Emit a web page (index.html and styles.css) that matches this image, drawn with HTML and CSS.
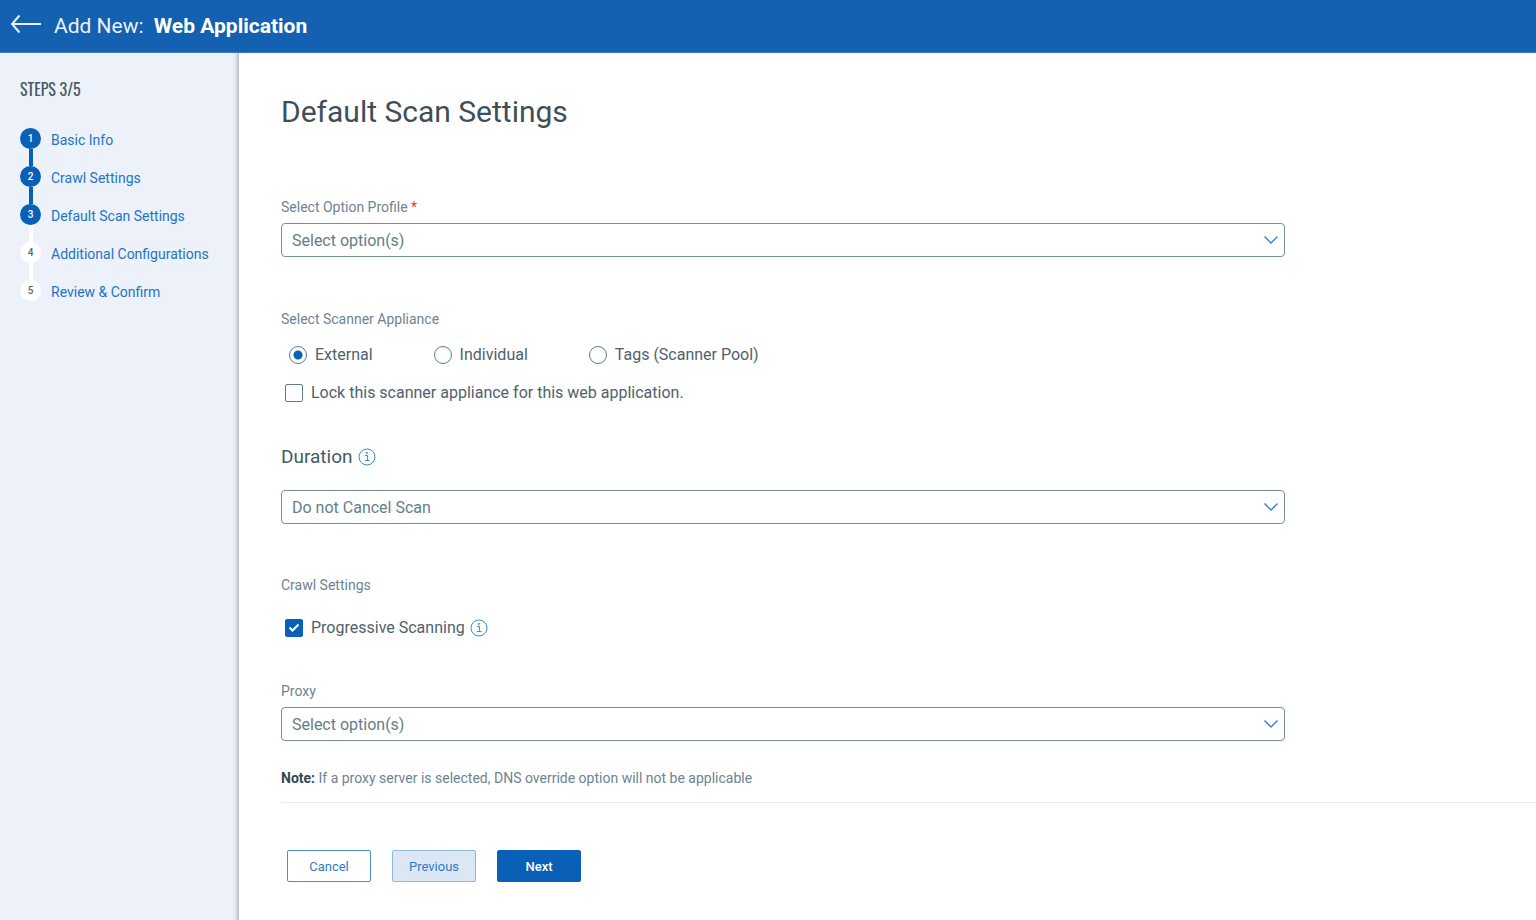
FILE: index.html
```html
<!DOCTYPE html>
<html lang="en">
<head>
<meta charset="utf-8">
<meta name="viewport" content="width=device-width, initial-scale=1">
<title>Add New: Web Application</title>
<link rel="stylesheet" href="styles.css">
</head>
<body>
<header class="topbar">
  <button class="back" type="button" aria-label="Back">
    <svg width="32" height="20" viewBox="0 0 32 20" fill="none" stroke="currentColor" stroke-width="2"><path d="M31 10H2M9.500 1.500L2 10L9.500 18.500"/></svg>
  </button>
  <h1 class="topbar-title">Add New: <strong>Web Application</strong></h1>
</header>
<div class="layout">
  <nav class="sidebar" aria-label="Steps">
    <h2 class="steps-title">STEPS 3/5</h2>
    <ol class="steps">
      <li class="step done"><span class="num">1</span><a href="#basic">Basic Info</a></li>
      <li class="step done"><span class="num">2</span><a href="#crawl">Crawl Settings</a></li>
      <li class="step current"><span class="num">3</span><a href="#scan">Default Scan Settings</a></li>
      <li class="step"><span class="num">4</span><a href="#additional">Additional Configurations</a></li>
      <li class="step"><span class="num">5</span><a href="#review">Review &amp; Confirm</a></li>
    </ol>
  </nav>
  <main class="content">
    <form class="form">
      <h2 class="page-title">Default Scan Settings</h2>

      <section class="group group-profile">
        <label class="label" for="profile">Select Option Profile <span class="required">*</span></label>
        <div class="select-box">
          <select id="profile"><option>Select option(s)</option></select>
          <svg class="chevron" width="16" height="10" viewBox="0 0 16 10"><path d="M1.500 1.500L8 8L14.500 1.500"/></svg>
        </div>
      </section>

      <fieldset class="group">
        <legend class="label">Select Scanner Appliance</legend>
        <div class="radios">
          <label class="choice"><input type="radio" name="scanner" checked>External</label>
          <label class="choice"><input type="radio" name="scanner">Individual</label>
          <label class="choice"><input type="radio" name="scanner">Tags (Scanner Pool)</label>
        </div>
        <label class="choice check"><input type="checkbox">Lock this scanner appliance for this web application.</label>
      </fieldset>

      <section class="group group-duration">
        <div class="heading">
          <label class="heading-label" for="duration">Duration</label>
          <svg class="info" width="18" height="18" viewBox="0 0 18 18"><circle cx="9" cy="9" r="8"/><path d="M7 7.500H9.500V12.500M7 12.500H11.500"/><path class="info-dot" d="M8 4h1.700v1.700H8z"/></svg>
        </div>
        <div class="select-box">
          <select id="duration"><option>Do not Cancel Scan</option></select>
          <svg class="chevron" width="16" height="10" viewBox="0 0 16 10"><path d="M1.500 1.500L8 8L14.500 1.500"/></svg>
        </div>
      </section>

      <fieldset class="group group-crawl">
        <legend class="label">Crawl Settings</legend>
        <div class="check-row">
          <label class="choice check"><input type="checkbox" checked>Progressive Scanning</label>
          <svg class="info" width="18" height="18" viewBox="0 0 18 18"><circle cx="9" cy="9" r="8"/><path d="M7 7.500H9.500V12.500M7 12.500H11.500"/><path class="info-dot" d="M8 4h1.700v1.700H8z"/></svg>
        </div>
      </fieldset>

      <section class="group group-proxy">
        <label class="label" for="proxy">Proxy</label>
        <div class="select-box">
          <select id="proxy"><option>Select option(s)</option></select>
          <svg class="chevron" width="16" height="10" viewBox="0 0 16 10"><path d="M1.500 1.500L8 8L14.500 1.500"/></svg>
        </div>
        <p class="note"><strong>Note:</strong> If a proxy server is selected, DNS override option will not be applicable</p>
      </section>

      <div class="actions">
        <button class="btn" type="button">Cancel</button>
        <button class="btn btn-soft" type="button">Previous</button>
        <button class="btn btn-primary" type="submit">Next</button>
      </div>
    </form>
  </main>
</div>
</body>
</html>
```
FILE: styles.css
```css
* { box-sizing: border-box; }

body {
  margin: 0;
  min-height: 100vh;
  display: flex;
  flex-direction: column;
  font-family: Roboto, "Liberation Sans", sans-serif;
  color: #455a64;
  background: #fff;
}

h1, h2, p, ol, fieldset, legend { margin: 0; padding: 0; }
fieldset { border: 0; min-width: 0; }
button, select, input { font-family: inherit; margin: 0; }

.topbar {
  display: flex;
  align-items: center;
  gap: 12px;
  height: 53px;
  padding: 0 10px;
  background: #1461b1;
  border-bottom: 1px solid #3a7cc0;
  color: #e9f2fb;
}
.back {
  display: flex;
  padding: 0 0 4px;
  border: 0;
  background: none;
  color: inherit;
}
.topbar-title { font-size: 21px; line-height: 28px; font-weight: 400; }
.topbar-title strong { margin-left: 5px; font-weight: 700; color: #fff; }

.layout { display: flex; flex: 1; }

.sidebar {
  flex: 0 0 239px;
  padding: 24px 20px;
  background: linear-gradient(to left, #b4bac2, #dde2ea 3px, #ecf1fa 6px);
}
.steps-title {
  font-family: Oswald, "Roboto Condensed", "Liberation Sans Narrow", sans-serif;
  font-size: 16px;
  line-height: 24px;
  font-weight: 400;
}
.steps { margin-top: 27px; list-style: none; }
.step {
  display: grid;
  grid-template-columns: 21px 1fr;
  grid-template-rows: 21px 17px;
  column-gap: 10px;
  font-size: 14px;
  line-height: 24px;
}
.step a { color: #2474c6; text-decoration: none; white-space: nowrap; }
.num {
  border-radius: 50%;
  background: #fff;
  color: #5a666d;
  font-size: 10px;
  font-weight: 500;
  line-height: 21px;
  text-align: center;
}
.done .num, .current .num { background: #0a5fb7; color: #fff; }
.step:not(:last-child)::after {
  content: "";
  grid-row: 2;
  width: 4px;
  justify-self: center;
  background: #fff;
}
.step.done::after { background: #0a5fb7; }

.content { flex: 1; min-width: 0; padding: 39px 0 37px 42px; }
.page-title { font-size: 30px; line-height: 40px; font-weight: 400; color: #3f4f58; }

.group { margin-top: 41px; }
.group-profile { margin: 65px 0 52px; }
.group-duration { margin-top: 38px; }
.group-crawl { margin-top: 51px; }

.label {
  display: block;
  font-size: 14px;
  line-height: 20px;
  color: #6d8492;
}
.required { color: #e53935; }

.select-box {
  position: relative;
  width: 80%;
  margin-top: 6px;
}
.select-box select {
  display: block;
  width: 100%;
  height: 34px;
  padding: 0 40px 0 10px;
  border: 1px solid #78909c;
  border-radius: 4px;
  appearance: none;
  background: #fff;
  color: #647d8a;
  font-size: 16px;
}
.chevron {
  position: absolute;
  right: 6px;
  top: 12px;
  fill: none;
  stroke: #2f7fd0;
  stroke-width: 1.4;
  pointer-events: none;
}

.radios {
  display: flex;
  gap: 61px;
  margin: 14px 0;
  padding-left: 8px;
}
.choice {
  display: flex;
  align-items: center;
  gap: 8px;
  font-size: 16px;
  line-height: 24px;
  color: #4f626c;
}
.check { padding-left: 4px; }
.choice input {
  appearance: none;
  flex: none;
  width: 18px;
  height: 18px;
  border: 1px solid #607d8b;
  background: #fff;
}
.choice input[type="radio"] { border-radius: 50%; }
.choice input[type="radio"]:checked {
  background: radial-gradient(circle, #0a5fb7 4px, #fff 5px);
}
.choice input[type="checkbox"] { border-radius: 2px; }
.choice input[type="checkbox"]:checked {
  border-color: #0a5fb7;
  background: #0a5fb7 url("data:image/svg+xml,%3Csvg xmlns='http://www.w3.org/2000/svg' viewBox='0 0 16 16'%3E%3Cpath d='M3.500 7.500L6.500 10.500L12.500 4.500' fill='none' stroke='white' stroke-width='2'/%3E%3C/svg%3E") center / 16px 16px no-repeat;
}

.heading { display: flex; align-items: center; gap: 5px; }
.heading-label { font-size: 19px; line-height: 28px; color: #455a64; }
.group-duration .select-box { margin-top: 19px; }
.info { flex: none; fill: none; stroke: #3f8bd8; stroke-width: 1; }
.info .info-dot { fill: #3f8bd8; stroke: none; }

.check-row { display: flex; align-items: center; gap: 5px; margin-top: 21px; }

.note {
  margin-top: 27px;
  padding-bottom: 14px;
  border-bottom: 1px solid #e8ecef;
  font-size: 14px;
  line-height: 20px;
  color: #6d8492;
}
.note strong { color: #37474f; font-weight: 700; }

.actions { display: flex; gap: 21px; margin-top: 47px; padding-left: 6px; }
.btn {
  width: 84px;
  height: 32px;
  padding: 0;
  border: 1px solid #4b8fd3;
  border-radius: 2px;
  background: #fff;
  color: #2f7bc8;
  font-size: 13px;
  font-weight: 400;
}
.btn-soft { border-color: #8fb9e3; background: #dbe7f5; }
.btn-primary { border-color: #0a5fb7; background: #0a5fb7; color: #fff; font-weight: 500; }
```
